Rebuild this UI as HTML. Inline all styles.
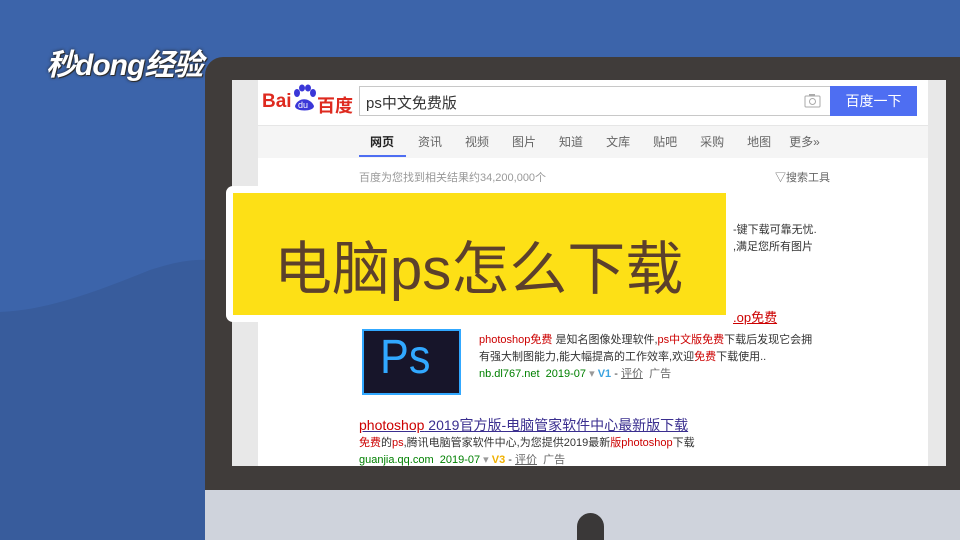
<!DOCTYPE html>
<html style="width:960px;height:540px;overflow:hidden"><head><meta charset="utf-8"><style>
*{margin:0;padding:0;box-sizing:border-box}
body{width:960px;height:540px;overflow:hidden;background:#3c64aa;position:relative;font-family:"Liberation Sans","Noto Sans CJK SC",sans-serif}
.abs{position:absolute}
.t{position:absolute;white-space:nowrap}
</style></head><body>
<svg class="abs" style="left:0;top:0" width="960" height="540"><path d="M0 312 C50 310 100 290 150 270 C175 262 190 259 210 260 L210 540 L0 540Z" fill="#385c9c"/></svg>
<div class="t" style="left:46px;top:40px;font-size:30px;font-weight:bold;color:#fff;font-style:italic;text-shadow:0 0 3px #222,1px 1px 0 #333;letter-spacing:-1px">秒dong经验</div>
<div class="abs" style="left:205px;top:57px;width:755px;height:433px;background:#403c3a;border-top-left-radius:18px"></div>
<div class="abs" style="left:205px;top:490px;width:755px;height:50px;background:#cfd3dc"></div>
<div class="abs" style="left:577px;top:513px;width:27px;height:27px;border-radius:50% 50% 0 0/50% 50% 0 0;background:#3a3838"></div>
<div class="abs" style="left:232px;top:80px;width:714px;height:386px;background:#e8e8e8"></div>
<div class="abs" style="left:258px;top:80px;width:670px;height:386px;background:#fff"></div>
<div class="abs" style="left:258px;top:125px;width:670px;height:33px;background:#f5f5f5;border-top:1px solid #e6e6e6"></div>
<div class="t" style="left:262px;top:91px;font-size:19px;font-weight:bold;color:#de2a1f">Bai</div>
<div class="abs" style="left:292px;top:84px;width:24px;height:26px;"><svg width="24" height="28"><g fill="#3a37d8"><ellipse cx="5" cy="9" rx="3" ry="4"/><ellipse cx="10" cy="4" rx="3" ry="3.5"/><ellipse cx="16" cy="4" rx="3" ry="3.5"/><ellipse cx="21" cy="9" rx="3" ry="4"/><path d="M3 22 C6 13 18 13 22 22 C22 28 3 28 3 22Z"/></g><text x="6" y="24" font-size="9" fill="#fff" font-family="Liberation Sans">du</text></svg></div>
<div class="t" style="left:317px;top:92px;font-size:18px;font-weight:bold;color:#de2a1f">百度</div>
<div class="abs" style="left:359px;top:86px;width:472px;height:30px;border:1px solid #c8c8c8;background:#fff"></div>
<div class="t" style="left:366px;top:92px;font-size:15px;color:#333">ps中文免费版</div>
<svg class="abs" style="left:804px;top:93px" width="17" height="15"><rect x="1" y="3" width="15" height="11" rx="1" fill="none" stroke="#aaa"/><circle cx="8.5" cy="8.5" r="3" fill="none" stroke="#aaa"/><rect x="5" y="1" width="6" height="2" fill="#aaa"/></svg>
<div class="abs" style="left:830px;top:86px;width:87px;height:30px;background:#4e6ef2;color:#fff;font-size:14px;text-align:center;line-height:30px">百度一下</div>
<div class="t" style="left:370px;top:133px;font-size:12px;color:#222;font-weight:bold">网页</div>
<div class="abs" style="left:359px;top:155px;width:47px;height:2px;background:#4e6ef2"></div>
<div class="t" style="left:418px;top:133px;font-size:12px;color:#666;word-spacing:0"><span style="margin-right:23px">资讯</span><span style="margin-right:23px">视频</span><span style="margin-right:23px">图片</span><span style="margin-right:23px">知道</span><span style="margin-right:23px">文库</span><span style="margin-right:23px">贴吧</span><span style="margin-right:23px">采购</span><span style="margin-right:18px">地图</span>更多»</div>
<div class="t" style="left:359px;top:169px;font-size:11px;color:#999">百度为您找到相关结果约34,200,000个</div>
<div class="t" style="left:775px;top:169px;font-size:11px;color:#666">▽搜索工具</div>
<div class="t" style="left:733px;top:221px;font-size:11px;color:#333">-键下载可靠无忧.</div>
<div class="t" style="left:733px;top:238px;font-size:11px;color:#333">,满足您所有图片</div>
<div class="t" style="left:733px;top:307px;font-size:13px;color:#c00;text-decoration:underline">.op免费</div>
<div class="abs" style="left:226px;top:186px;width:506px;height:136px;background:#fff;border-radius:7px"></div>
<div class="abs" style="left:233px;top:193px;width:493px;height:122px;background:#fde016"></div>
<div class="t" style="left:274px;top:222px;font-size:58px;color:#5c402c">电脑ps怎么下载</div>
<div class="abs" style="left:362px;top:329px;width:99px;height:66px;background:#17152a;border:2px solid #31a8ff"></div>
<div class="t" style="left:380px;top:330px;font-size:48px;color:#31a8ff;transform:scaleX(0.9);transform-origin:left">Ps</div>
<div class="t" style="left:479px;top:332px;font-size:11px;color:#333;line-height:17px"><span style="color:#c00">photoshop免费</span> 是知名图像处理软件,<span style="color:#c00">ps中文版免费</span>下载后发现它会拥<br>有强大制图能力,能大幅提高的工作效率,欢迎<span style="color:#c00">免费</span>下载使用..<br><span style="color:#008000">nb.dl767.net&nbsp; 2019-07</span> <span style="color:#999">▾</span> <span style="color:#3ba3e0;font-weight:bold">V1</span> - <u style="color:#666">评价</u>&nbsp; <span style="color:#666">广告</span></div>
<div class="t" style="left:359px;top:415px;font-size:14px;color:#3a2e8f;text-decoration:underline"><span style="color:#c00">photoshop</span> 2019官方版-电脑管家软件中心最新版下载</div>
<div class="t" style="left:359px;top:435px;font-size:11px;color:#333;line-height:17px"><span style="color:#c00">免费</span>的<span style="color:#c00">ps</span>,腾讯电脑管家软件中心,为您提供2019最新<span style="color:#c00">版photoshop</span>下载<br><span style="color:#008000">guanjia.qq.com&nbsp; 2019-07</span> <span style="color:#999">▾</span> <span style="color:#f0b000;font-weight:bold">V3</span> - <u style="color:#666">评价</u>&nbsp; <span style="color:#666">广告</span></div>
<div class="abs" style="left:232px;top:466px;width:714px;height:24px;background:#403c3a"></div>
</body></html>
